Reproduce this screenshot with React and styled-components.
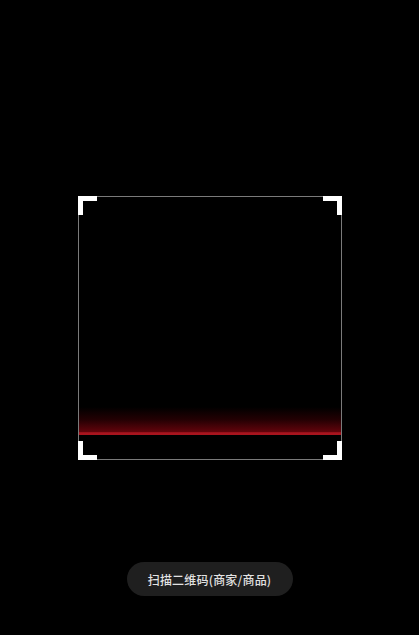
import React from "react";
import styled, { createGlobalStyle } from "styled-components";

const GlobalStyle = createGlobalStyle`
  html, body {
    margin: 0;
    padding: 0;
    background: #000;
    font-family: "Noto Sans CJK SC", "Noto Sans", sans-serif;
  }
`;

const Page = styled.div`
  width: 419px;
  height: 635px;
  background: #000;
  display: flex;
  flex-direction: column;
  align-items: center;
  padding-top: 196px;
  box-sizing: border-box;
`;

const Frame = styled.div`
  position: relative;
  width: 264px;
  height: 264px;
  box-sizing: border-box;
  border: 1px solid #7a7a7a;
`;

const Corner = styled.div`
  position: absolute;
  width: 19px;
  height: 19px;
  box-sizing: border-box;
  border-color: #fff;
  border-style: solid;
  border-width: 0;
  ${(p) => (p.top ? "top: -1px;" : "bottom: -1px;")}
  ${(p) => (p.left ? "left: -1px;" : "right: -1px;")}
  ${(p) => (p.top ? "border-top-width: 5px;" : "border-bottom-width: 5px;")}
  ${(p) => (p.left ? "border-left-width: 5px;" : "border-right-width: 5px;")}
`;

const ScanLine = styled.div`
  position: absolute;
  left: 0;
  right: 0;
  top: 210px;
  height: 28px;
  background: linear-gradient(
    to bottom,
    rgba(100, 0, 8, 0) 0%,
    rgba(100, 0, 8, 0.35) 45%,
    rgba(130, 5, 15, 0.75) 88%,
    #a8141e 92%,
    #a8141e 100%
  );
`;

const Hint = styled.div`
  margin-top: 102px;
  width: 166px;
  height: 34px;
  border-radius: 17px;
  background: #1f1f1f;
  color: #e2e2e2;
  font-size: 12px;
  font-weight: 500;
  display: flex;
  align-items: center;
  justify-content: center;
  letter-spacing: 0.2px;
`;

export default function App() {
  return (
    <>
      <GlobalStyle />
      <Page>
        <Frame>
          <ScanLine />
          <Corner top left />
          <Corner top />
          <Corner left />
          <Corner />
        </Frame>
        <Hint>扫描二维码(商家/商品)</Hint>
      </Page>
    </>
  );
}
